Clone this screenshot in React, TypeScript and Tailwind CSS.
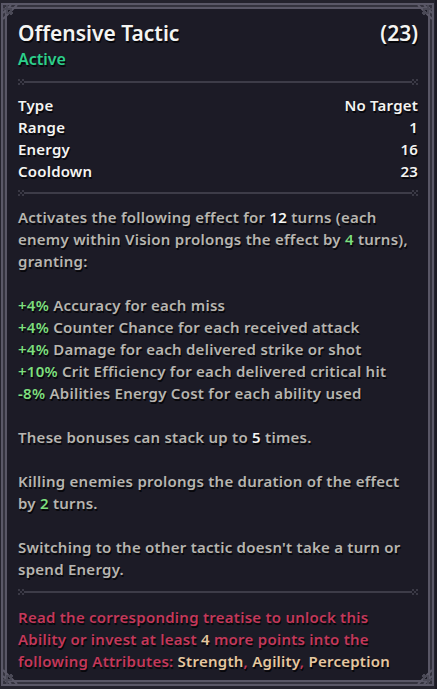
const FONT = "font-['Noto_Sans',sans-serif]"
const SHADOW = '[text-shadow:1px_2px_0_#07070b]'

function Separator() {
  return (
    <div className="flex h-[6px] items-center">
      <svg width="12" height="6" viewBox="0 0 12 6" className="shrink-0">
        <rect x="0" y="0" width="2" height="2" fill="#3a3945" />
        <rect x="0" y="4" width="2" height="2" fill="#3a3945" />
        <rect x="2" y="2" width="2" height="2" fill="#3a3945" />
        <rect x="4" y="0" width="2" height="2" fill="#3a3945" />
        <rect x="4" y="4" width="2" height="2" fill="#3a3945" />
        <rect x="6" y="2" width="6" height="2" fill="#3d3c48" />
      </svg>
      <div className="h-[2px] flex-1 bg-[#3d3c48]" />
      <svg width="12" height="6" viewBox="0 0 12 6" className="shrink-0">
        <rect x="0" y="2" width="6" height="2" fill="#3d3c48" />
        <rect x="6" y="0" width="2" height="2" fill="#3a3945" />
        <rect x="6" y="4" width="2" height="2" fill="#3a3945" />
        <rect x="8" y="2" width="2" height="2" fill="#3a3945" />
        <rect x="10" y="0" width="2" height="2" fill="#3a3945" />
        <rect x="10" y="4" width="2" height="2" fill="#3a3945" />
      </svg>
    </div>
  )
}

function Corner({ className }: { className: string }) {
  return (
    <svg width="16" height="16" viewBox="0 0 16 16" className={`absolute ${className}`}>
      <path d="M1 15 L15 1" stroke="#5b5968" strokeWidth="2" />
      <path d="M1 9 L9 1" stroke="#5b5968" strokeWidth="2" />
      <path d="M5 1 V8 M1 5 H8" stroke="#4a4956" strokeWidth="2" />
      <path d="M9 4 V11 M4 9 H11" stroke="#4a4956" strokeWidth="2" />
    </svg>
  )
}

const G = ({ children }: { children: React.ReactNode }) => <span className="text-[#7ddf7e]">{children}</span>
const W = ({ children }: { children: React.ReactNode }) => <span className="text-[#f4f4f2]">{children}</span>
const T = ({ children }: { children: React.ReactNode }) => <span className="text-[#e5c79f]">{children}</span>

const stats = [
  ['Type', 'No Target'],
  ['Range', '1'],
  ['Energy', '16'],
  ['Cooldown', '23'],
]

export default function App() {
  return (
    <div className={`h-[689px] w-[437px] bg-[#1c1b25] pr-[2px] ${FONT}`}>
      <div className="relative h-full border-x-[1px] border-y-[3px] border-[#24232d]">
        <div className="h-full border-2 border-[#5a5867]">
          <div className="h-full border-2 border-[#34333e]">
            <div className="h-full border-2 border-[#595766] bg-[#1c1b26] pl-[11px] pr-[10px] pt-[12px] font-semibold">
              <div className={`flex items-center justify-between text-[21px] leading-[24px] text-[#f4f4f2] ${SHADOW}`}>
                <span>Offensive Tactic</span>
                <span>(23)</span>
              </div>
              <div className={`mt-[3px] text-[16px] leading-[22px] text-[#2ccf8b] ${SHADOW}`}>Active</div>

              <div className="mt-[9px]">
                <Separator />
              </div>

              <div className={`mt-[9px] text-[15px] leading-[22px] tracking-[0.2px] text-[#f4f4f2] ${SHADOW}`}>
                {stats.map(([label, value]) => (
                  <div key={label} className="flex justify-between">
                    <span>{label}</span>
                    <span>{value}</span>
                  </div>
                ))}
              </div>

              <div className="mt-[8px]">
                <Separator />
              </div>

              <div className={`mt-[10px] whitespace-nowrap text-[15px] leading-[22px] tracking-[0.25px] text-[#b7b5b0] ${SHADOW}`}>
                <div>
                  Activates the following effect for <W>12</W> turns (each
                </div>
                <div>
                  enemy within Vision prolongs the effect by <G>4</G> turns),
                </div>
                <div>granting:</div>
                <div className="h-[22px]" />
                <div>
                  <G>+4%</G> Accuracy for each miss
                </div>
                <div>
                  <G>+4%</G> Counter Chance for each received attack
                </div>
                <div>
                  <G>+4%</G> Damage for each delivered strike or shot
                </div>
                <div>
                  <G>+10%</G> Crit Efficiency for each delivered critical hit
                </div>
                <div>
                  <G>-8%</G> Abilities Energy Cost for each ability used
                </div>
                <div className="h-[22px]" />
                <div>
                  These bonuses can stack up to <W>5</W> times.
                </div>
                <div className="h-[22px]" />
                <div>Killing enemies prolongs the duration of the effect</div>
                <div>
                  by <G>2</G> turns.
                </div>
                <div className="h-[22px]" />
                <div>Switching to the other tactic doesn't take a turn or</div>
                <div>spend Energy.</div>
              </div>

              <div className="mt-[9px]">
                <Separator />
              </div>

              <div className={`mt-[11px] whitespace-nowrap text-[15px] leading-[22px] tracking-[0.25px] text-[#c3385a] ${SHADOW}`}>
                <div>Read the corresponding treatise to unlock this</div>
                <div>
                  Ability or invest at least <T>4</T> more points into the
                </div>
                <div>
                  following Attributes: <T>Strength</T>, <T>Agility</T>, <T>Perception</T>
                </div>
              </div>
            </div>
          </div>
        </div>
        <Corner className="left-[1px] top-[1px]" />
        <Corner className="right-[1px] top-[1px] -scale-x-100" />
        <Corner className="bottom-[1px] left-[1px] -scale-y-100" />
        <Corner className="bottom-[1px] right-[1px] -scale-100" />
      </div>
    </div>
  )
}
